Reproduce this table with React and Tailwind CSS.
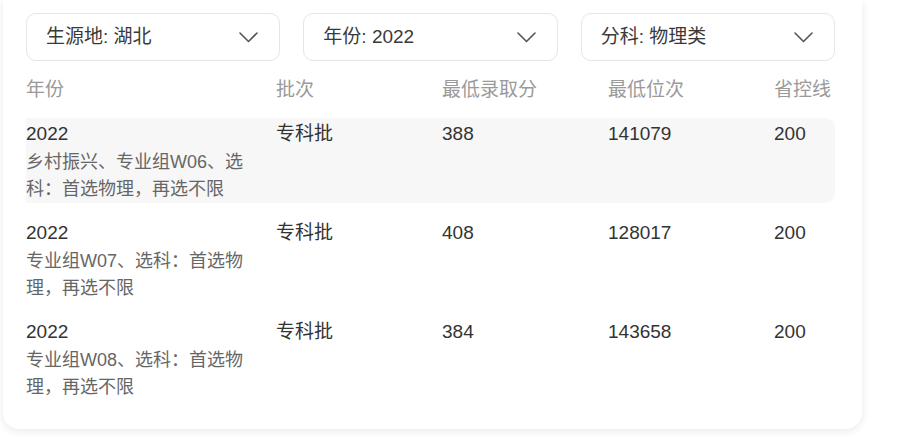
import React from "react";

const filters = ["生源地: 湖北", "年份: 2022", "分科: 物理类"];

const rows = [
  { year: "2022", note: "乡村振兴、专业组W06、选科：首选物理，再选不限", batch: "专科批", score: "388", rank: "141079", line: "200", active: true },
  { year: "2022", note: "专业组W07、选科：首选物理，再选不限", batch: "专科批", score: "408", rank: "128017", line: "200" },
  { year: "2022", note: "专业组W08、选科：首选物理，再选不限", batch: "专科批", score: "384", rank: "143658", line: "200" },
];

const cols = "grid grid-cols-[250px_166px_166px_166px_1fr]";

const Chevron = () => (
  <svg width="19" height="11" viewBox="0 0 19 11" fill="none" className="shrink-0">
    <path d="M1 1l8.5 8.5L18 1" stroke="#555" strokeWidth="1.6" strokeLinecap="round" strokeLinejoin="round" />
  </svg>
);

export default function App() {
  return (
    <div className="min-h-screen bg-white" style={{ fontFamily: '"Liberation Sans", "Noto Sans CJK SC", sans-serif' }}>
      <div className="ml-[3px] w-[859px] rounded-b-2xl bg-white pl-[23px] pr-[27px] pt-[13px] pb-[28px] shadow-[0_2px_10px_rgba(0,0,0,0.09)]">
        <div className="flex gap-[23px]">
          {filters.map((f) => (
            <div key={f} className="flex h-[48px] flex-1 items-center justify-between rounded-[10px] border border-[#e6e6e6] pl-[19px] pr-[21px] text-[19px] text-[#3a3a3a]">
              <span>{f}</span>
              <Chevron />
            </div>
          ))}
        </div>

        <div className={`${cols} mt-[15px] text-[19px] leading-[28px] text-[#9a9a9a]`}>
          <div>年份</div>
          <div>批次</div>
          <div>最低录取分</div>
          <div>最低位次</div>
          <div>省控线</div>
        </div>

        <div className="mt-[14px] flex flex-col gap-[14px]">
          {rows.map((r, i) => (
            <div key={i} className={`${cols} rounded-r-[10px] ${r.active ? "bg-[#f7f7f7]" : ""} text-[19px] leading-[31px] text-[#333]`}>
              <div className="pr-[4px]">
                <div>{r.year}</div>
                <div className="text-[18px] leading-[27px] text-[#666]">{r.note}</div>
              </div>
              <div>{r.batch}</div>
              <div>{r.score}</div>
              <div>{r.rank}</div>
              <div>{r.line}</div>
            </div>
          ))}
        </div>
      </div>
    </div>
  );
}
